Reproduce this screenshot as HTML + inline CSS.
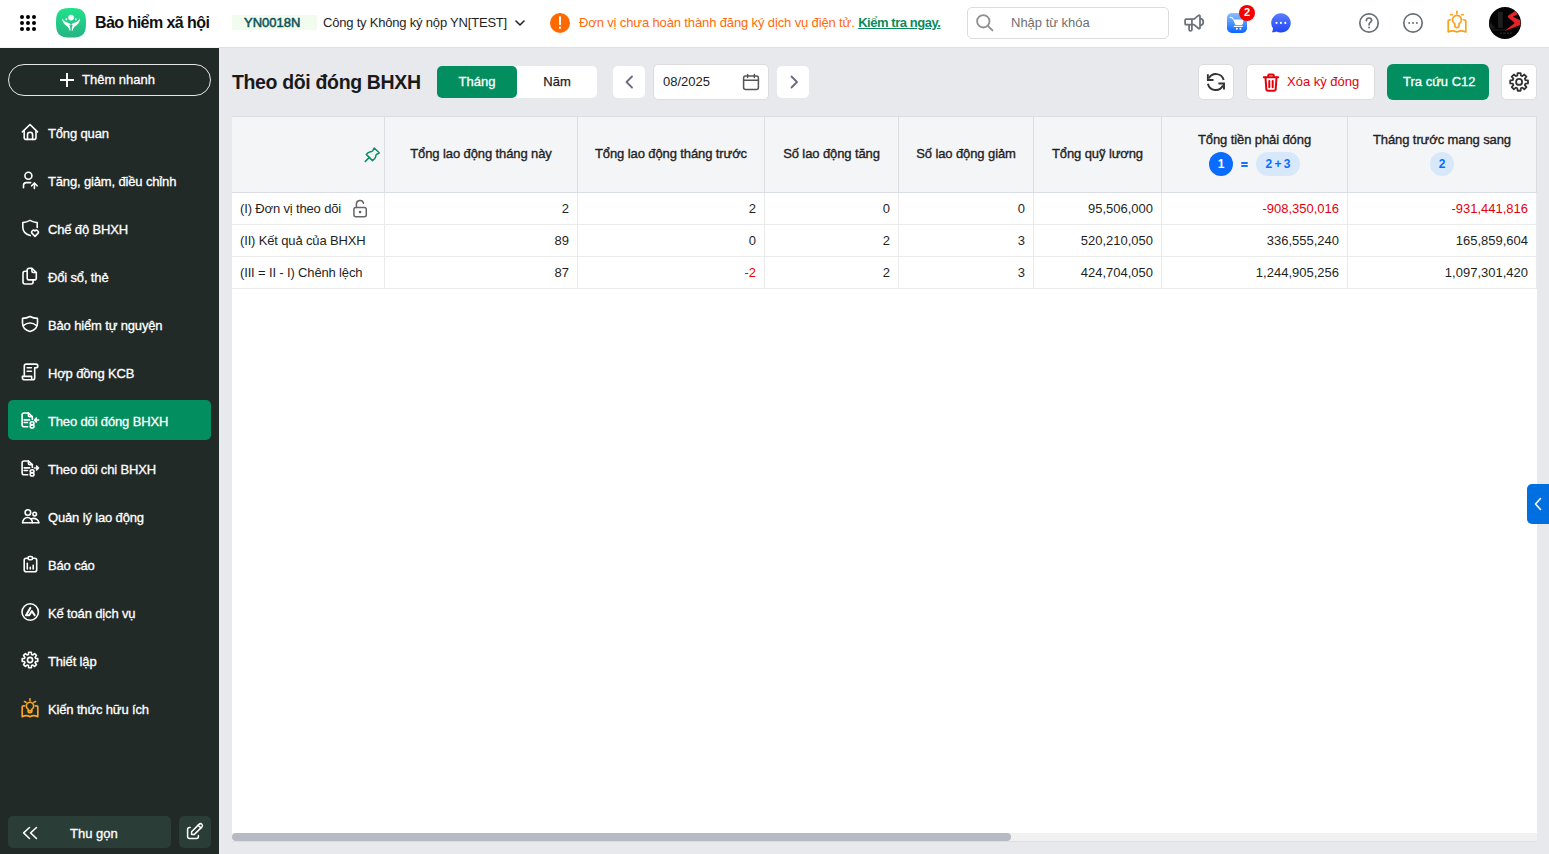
<!DOCTYPE html>
<html><head><meta charset="utf-8">
<style>
*{box-sizing:border-box;margin:0;padding:0}
html,body{width:1549px;height:854px;overflow:hidden;background:#e8e9ed;font-family:"Liberation Sans",sans-serif;color:#1f1f1f}
.abs{position:absolute}
svg{display:block}
/* header */
#hdr{position:absolute;left:0;top:0;width:1549px;height:47px;background:#fff}
.htxt{position:absolute;white-space:nowrap;line-height:16px}
/* sidebar */
#side{position:absolute;left:0;top:48px;width:219px;height:806px;background:#222a28}
.mi{position:absolute;left:8px;width:203px;height:40px;border-radius:5px}
.mi .ic{position:absolute;left:6px;top:6px}
.mi .t{position:absolute;left:40px;top:2px;line-height:40px;font-size:13px;color:#fff;white-space:nowrap;letter-spacing:-.15px;-webkit-text-stroke:.3px #fff}
.mi.act{background:#028e5e}
/* main */
.btnw{position:absolute;background:#fff;border-radius:5px}
#tbl{position:absolute;left:232px;top:116px;width:1305px;height:726px;background:#fff}
.th{position:absolute;top:0;height:77px;background:#f4f5f7;border-top:1px solid #dcdee8;border-bottom:1px solid #dcdee8;border-right:1px solid #dedfe3}
.thl{position:absolute;width:100%;text-align:center;font-size:13px;font-weight:700;letter-spacing:-.5px;color:#1f1f1f;white-space:nowrap}
.row{position:absolute;left:0;width:1305px;height:32px;border-bottom:1px solid #ebebeb}
.cell{position:absolute;top:0;height:31px;line-height:31px;font-size:13px;color:#1f1f1f;border-right:1px solid #ebebeb;text-align:right;padding-right:8px;white-space:nowrap}
.hd{font-size:13px;font-weight:400;-webkit-text-stroke:.35px #1f1f1f;letter-spacing:-.1px;line-height:16px;text-align:center;white-space:nowrap;color:#1f1f1f}
.bt{font-size:13px;line-height:16px;white-space:nowrap;color:#1f1f1f}
.bdg{height:24px;border-radius:12px;text-align:center;line-height:24px;font-size:12px;font-weight:700}
.bt.neg{color:#e4000f}
.tb{top:74px;font-size:13px;line-height:16px;white-space:nowrap}
</style></head>
<body>
<div id="hdr">
  <!-- apps grid -->
  <svg class="abs" style="left:18px;top:13px" width="20" height="20" viewBox="0 0 20 20" fill="#000">
    <circle cx="4" cy="4" r="2"/><circle cx="10" cy="4" r="2"/><circle cx="16" cy="4" r="2"/>
    <circle cx="4" cy="10" r="2"/><circle cx="10" cy="10" r="2"/><circle cx="16" cy="10" r="2"/>
    <circle cx="4" cy="16" r="2"/><circle cx="10" cy="16" r="2"/><circle cx="16" cy="16" r="2"/>
  </svg>
  <!-- logo -->
  <svg class="abs" style="left:56px;top:8px" width="30" height="30" viewBox="0 0 30 30">
    <defs><linearGradient id="lg" x1="0" y1="0" x2="0" y2="1"><stop offset="0" stop-color="#20e28b"/><stop offset="1" stop-color="#26b384"/></linearGradient></defs>
    <path d="M15 0C26.6 0 30 3 30 14.8S26.6 29.6 15 29.6 0 26.6 0 14.8 3.4 0 15 0Z" fill="url(#lg)"/>
    <circle cx="15.1" cy="9.6" r="2.8" fill="#fff"/>
    <path d="M10.35 10.1l1.2 1.25-1.2 1.25-1.2-1.25z M19.85 10.1l1.2 1.25-1.2 1.25-1.2-1.25z" fill="#fff"/>
    <path id="hl" d="M6.2 10C6.3 13.5 7.5 15.8 10 17.5 12 18.9 13.2 20.5 13.6 22.8L14.4 22.8C14.5 20.5 14.3 18.6 13.5 17.2 14 16.8 14.8 16.5 15.1 16.6 14 15.6 12.5 15 11.2 14.6 9.5 14 7.2 12.6 6.2 10Z" fill="#fff"/>
    <use href="#hl" transform="translate(30.2 0) scale(-1 1)"/>
  </svg>
  <div class="htxt" style="left:95px;top:14px;font-size:16px;font-weight:700;letter-spacing:-.55px;color:#111;line-height:18px">Bảo hiểm xã hội</div>
  <!-- code badge -->
  <div class="abs" style="left:232px;top:15px;width:85px;height:15px;background:#f1fbee"></div>
  <div class="htxt" style="left:244px;top:15px;font-size:13px;font-weight:400;-webkit-text-stroke:.5px #0a5258;color:#0a5258">YN0018N</div>
  <div class="htxt" style="left:323px;top:15px;font-size:13px;color:#1f1f1f;letter-spacing:-.2px">Công ty Không ký nộp YN[TEST]</div>
  <svg class="abs" style="left:513px;top:16px" width="14" height="14" viewBox="0 0 14 14"><path d="M3 5l4 4 4-4" fill="none" stroke="#222" stroke-width="1.6" stroke-linecap="round" stroke-linejoin="round"/></svg>
  <!-- alert -->
  <svg class="abs" style="left:550px;top:13px" width="20" height="20" viewBox="0 0 20 20"><circle cx="10" cy="10" r="10" fill="#ff6a00"/><rect x="9" y="3.2" width="2" height="8.8" rx=".5" fill="#fff"/><rect x="9" y="13.7" width="2" height="2" fill="#fff"/></svg>
  <div class="htxt" style="left:579px;top:15px;font-size:13px;color:#ff6a0a;letter-spacing:-.13px">Đơn vị chưa hoàn thành đăng ký dịch vụ điện tử. <span style="color:#0a8a5c;font-weight:700;text-decoration:underline;letter-spacing:-.45px">Kiểm tra ngay.</span></div>
  <!-- search -->
  <div class="abs" style="left:967px;top:7px;width:202px;height:32px;border:1px solid #dcdcdc;border-radius:5px;background:#fff"></div>
  <svg class="abs" style="left:975px;top:13px" width="20" height="20" viewBox="0 0 20 20"><circle cx="8.3" cy="8.3" r="6.2" fill="none" stroke="#909090" stroke-width="1.8"/><path d="M12.8 12.8l4.6 4.6" stroke="#909090" stroke-width="1.9" stroke-linecap="round"/></svg>
  <div class="htxt" style="left:1011px;top:15px;font-size:13px;color:#6f6f6f">Nhập từ khóa</div>
  <!-- megaphone -->
  <svg class="abs" style="left:1180px;top:8px" width="30" height="30" viewBox="0 0 30 30" fill="none" stroke="#6b7079" stroke-width="1.75" stroke-linejoin="round" stroke-linecap="round">
    <path d="M6.1 11.1H14l4.6-3.7c.6-.5 1.4-.1 1.4.7v11.7c0 .8-.8 1.2-1.4.7L14 16.7H6.1q-1 0-1-1v-3.6q0-1 1-1z"/><path d="M11.9 11.3v5.2"/><path d="M9.1 16.9v4.5a1.4 1.4 0 0 0 2.8 0v-4.5"/><path d="M20.9 10.6a3.6 3.6 0 0 1 0 6.8"/>
  </svg>
  <!-- cart -->
  <svg class="abs" style="left:1227px;top:13px" width="20" height="20" viewBox="0 0 20 20">
    <defs><linearGradient id="cg" x1="0" y1="0" x2="0" y2="1"><stop offset="0" stop-color="#8cc0ff"/><stop offset="1" stop-color="#0a66ff"/></linearGradient></defs>
    <rect width="20" height="20" rx="4.8" fill="url(#cg)"/>
    <path d="M3.2 4.4c1.6 0 2.4.4 2.9 1.6" fill="none" stroke="#fff" stroke-width="1.2" stroke-linecap="round"/>
    <path d="M6.1 6.6h10.4l-.5 3.8-1.1 1.7H8.4z" fill="#fff"/>
    <path d="M7.3 13.4h8" stroke="#fff" stroke-width="1.1" stroke-linecap="round"/>
    <circle cx="9.8" cy="15.8" r="1" fill="#fff"/><circle cx="13.4" cy="15.8" r="1" fill="#fff"/>
  </svg>
  <svg class="abs" style="left:1239px;top:5px" width="16" height="16" viewBox="0 0 16 16"><circle cx="8" cy="8" r="8" fill="#f50000"/></svg>
  <div class="htxt" style="left:1239px;top:4px;width:16px;text-align:center;font-size:11px;font-weight:700;color:#fff;line-height:16px">2</div>
  <!-- messenger -->
  <svg class="abs" style="left:1266px;top:8px" width="30" height="30" viewBox="0 0 30 30">
    <defs><linearGradient id="mg" x1="0" y1="0" x2="0" y2="1"><stop offset="0" stop-color="#5d7dff"/><stop offset="1" stop-color="#1f46f4"/></linearGradient></defs>
    <path d="M14.95 5.2a9.7 9.7 0 1 1-4.6 18.2c-1.4.5-3 .9-4.6.9.9-1 1.2-2.5 1.2-4A9.7 9.7 0 0 1 14.95 5.2z" fill="url(#mg)"/>
    <circle cx="10.5" cy="14.9" r="1.05" fill="#fff"/><circle cx="14.9" cy="14.9" r="1.05" fill="#fff"/><circle cx="19.3" cy="14.9" r="1.05" fill="#fff"/>
  </svg>
  <!-- help -->
  <svg class="abs" style="left:1358px;top:12px" width="22" height="22" viewBox="0 0 22 22" fill="none" stroke="#6b7079" stroke-width="1.7">
    <circle cx="11" cy="11" r="9.2"/><path d="M8.4 8.6c0-1.6 1.2-2.6 2.6-2.6s2.6 1 2.6 2.4c0 1.8-2.5 2-2.5 3.8v.6" stroke-linecap="round"/><circle cx="11.1" cy="15.6" r=".4" fill="#6b7079" stroke-width="1.2"/>
  </svg>
  <!-- more -->
  <svg class="abs" style="left:1402px;top:12px" width="22" height="22" viewBox="0 0 22 22">
    <circle cx="11" cy="11" r="9.2" fill="none" stroke="#6b7079" stroke-width="1.7"/><circle cx="7.2" cy="11" r="1" fill="#6b7079"/><circle cx="11" cy="11" r="1" fill="#6b7079"/><circle cx="14.8" cy="11" r="1" fill="#6b7079"/>
  </svg>
  <!-- bulb -->
  <svg class="abs" style="left:1442px;top:8px" width="30" height="30" viewBox="0 0 30 30" fill="none" stroke="#f9a11b" stroke-width="1.65" stroke-linecap="round" stroke-linejoin="round">
    <path id="bulbp" d="M14.9 3.4v2.2M8.5 6.7h1.9M19.4 6.7h2M12.8 15.6a4.4 4.4 0 1 1 4.3 0V18q0 1.6-1.6 1.6h-1.1q-1.6 0-1.6-1.6zM8.4 11.7q-2.2 0-2.2 1.3V24c3-1.6 5.8-1.6 8.7 0 2.9-1.6 5.8-1.6 8.9 0V13q0-1.3-2.4-1.3"/>
  </svg>
  <!-- avatar -->
  <svg class="abs" style="left:1489px;top:7px" width="32" height="32" viewBox="0 0 32 32">
    <defs><clipPath id="ac"><circle cx="16" cy="16" r="16"/></clipPath></defs>
    <g clip-path="url(#ac)"><rect width="32" height="32" fill="#030303"/>
    <path d="M0 13.8L6.6 21.5H0z" fill="#1c1c1c"/><rect x="8.9" y="4.7" width="4.9" height="16.1" fill="#1e1e1e"/>
    <path d="M26.2 4L28.8 7.2 23.9 9.8 31.4 13.3V18L15.5 24.1 25.8 16.1 19.2 10.5 18.7 9.1z" fill="#e5222a"/>
    <rect x="2.8" y="22.6" width="13" height=".8" fill="#2a2a2a"/>
    <path d="M11 26.2h2M14 26.2h3M18 26.2h2M21 26.2h2" stroke="#202020" stroke-width="1.6"/></g>
  </svg>
</div>

<div class="abs" style="left:0;top:47px;width:219px;height:1px;background:#f4f4f4"></div>
<div class="abs" style="left:219px;top:47px;width:1330px;height:1px;background:#e0e0e2"></div>
<div id="side">

<div class="abs" style="left:8px;top:16px;width:203px;height:32px;border:1px solid #e6e6e6;border-radius:16px"></div>
<svg class="abs" style="left:60px;top:25px" width="14" height="14" viewBox="0 0 14 14"><path d="M7 0v14M0 7h14" stroke="#fff" stroke-width="1.9"/></svg>
<div class="abs" style="left:82px;top:16px;line-height:32px;font-size:13px;color:#fff;white-space:nowrap;-webkit-text-stroke:.3px #fff">Thêm nhanh</div>
<div class="abs" style="left:8px;top:768px;width:163px;height:32px;background:#2a3d37;border-radius:5px"></div>
<svg class="abs" style="left:14px;top:770px" width="30" height="30" viewBox="0 0 30 30" fill="none" stroke="#fff" stroke-width="1.5" stroke-linecap="round" stroke-linejoin="round"><path d="M15.5 9.5L9.6 14.9l5.9 5.6M22.5 9.5l-5.9 5.4 5.9 5.6"/></svg>
<div class="abs" style="left:70px;top:770px;line-height:32px;font-size:13px;color:#fff;white-space:nowrap;-webkit-text-stroke:.3px #fff">Thu gọn</div>
<div class="abs" style="left:179px;top:768px;width:32px;height:32px;background:#2a3d37;border-radius:5px"></div>
<svg class="abs" style="left:180px;top:770px" width="30" height="30" viewBox="0 0 30 30" fill="none" stroke="#fff" stroke-width="1.5" stroke-linecap="round" stroke-linejoin="round"><path d="M10.2 9.5h-.6q-2 0-2 2v7q0 2 2 2h6.8q2 0 2-2v-.9"/><path d="M11.6 16.4v-2.7l7.6-7.6a2 2 0 0 1 2.8 2.8l-7.6 7.5z"/><path d="M18.1 7.2l2.7 2.7"/></svg>
<div class="mi" style="top:64px"><svg class="ic" width="30" height="30" viewBox="0 0 30 30" fill="none" stroke="#fff" stroke-width="1.6" stroke-linecap="round" stroke-linejoin="round"><path d="M8.4 13.9L16 6.5l7.5 7.4"/><path d="M10.2 12.6v6.8q0 2 2 2h7.8q2 0 2-2v-6.8"/><path d="M13.5 21.4v-4.6q0-2.5 2.55-2.5t2.55 2.5v4.6"/></svg><div class="t">Tổng quan</div></div>
<div class="mi" style="top:112px"><svg class="ic" width="30" height="30" viewBox="0 0 30 30" fill="none" stroke="#fff" stroke-width="1.6" stroke-linecap="round" stroke-linejoin="round"><circle cx="14.4" cy="9.8" r="3.5"/><path d="M9.5 21.8v-2.3q0-2.9 2.9-2.9h4.3"/><path d="M20.4 22.5v-5.4M17.7 19.8l2.7-2.8 2.7 2.8"/></svg><div class="t">Tăng, giảm, điều chỉnh</div></div>
<div class="mi" style="top:160px"><svg class="ic" width="30" height="30" viewBox="0 0 30 30" fill="none" stroke="#fff" stroke-width="1.6" stroke-linecap="round" stroke-linejoin="round"><path d="M23.2 13.4V8.6c-2.6-.2-4.9-.9-7.2-2.2-2.3 1.3-4.6 2-7.2 2.2V13c0 4.2 3 7.3 7.4 8.6"/><path d="M21 22.4l-2.9-3a1.75 1.75 0 0 1 2.9-2.4 1.75 1.75 0 0 1 2.9 2.4z"/></svg><div class="t">Chế độ BHXH</div></div>
<div class="mi" style="top:208px"><svg class="ic" width="30" height="30" viewBox="0 0 30 30" fill="none" stroke="#fff" stroke-width="1.6" stroke-linecap="round" stroke-linejoin="round"><path d="M13.1 9.3h-2.1q-2 0-2 2v8.7q0 2 2 2h6.1q2 0 2-2v-2.1"/><path d="M15.2 6.3h2.7l4.4 4.3v5.3q0 2-2 2h-5.1q-2 0-2-2v-7.6q0-2 2-2z"/><path d="M17.9 6.5v2.6q0 1.4 1.4 1.4h2.9"/></svg><div class="t">Đổi sổ, thẻ</div></div>
<div class="mi" style="top:256px"><svg class="ic" width="30" height="30" viewBox="0 0 30 30" fill="none" stroke="#fff" stroke-width="1.6" stroke-linecap="round" stroke-linejoin="round"><path d="M16 6.5c2.4 1.3 4.9 1.9 7.5 1.9V13c0 4.4-3 7.3-7.5 8.6-4.5-1.3-7.5-4.2-7.5-8.6V8.4c2.6 0 5.1-.6 7.5-1.9z"/><path d="M9.3 15.6c2-1.6 4.3-2.6 6.7-2.6s4.7 1 6.7 2.6"/></svg><div class="t">Bảo hiểm tự nguyện</div></div>
<div class="mi" style="top:304px"><svg class="ic" width="30" height="30" viewBox="0 0 30 30" fill="none" stroke="#fff" stroke-width="1.6" stroke-linecap="round" stroke-linejoin="round"><path d="M10.3 18.4V8.1q0-2 2-2h9.6q1.9 0 1.9 1.8t-1.9 1.8h-1.2v10q0 2.1-2.1 2.1h-8q-2.2 0-2.2-2v-1.4h9.2v1.6q0 1.8 1.2 1.8"/><path d="M13.2 9.7h4.2M13.2 13.2h4.2"/></svg><div class="t">Hợp đồng KCB</div></div>
<div class="mi act" style="top:352px"><svg class="ic" width="30" height="30" viewBox="0 0 30 30" fill="none" stroke="#fff" stroke-width="1.6" stroke-linecap="round" stroke-linejoin="round"><path d="M13.7 20.7h-3.6q-2 0-2-2v-9.7q0-2 2-2h4.3l3.9 3.7v2.8"/><path d="M14.4 7.1v2.3q0 1.2 1.2 1.2h2.6"/><path d="M10.2 13.9h5.4M10.2 16.5h3.3"/><ellipse cx="18.1" cy="17.2" rx="1.9" ry="1.5"/><ellipse cx="18.1" cy="20.4" rx="1.9" ry="1.6"/><path d="M24.6 14h-3.8M22.4 12.1l-1.9 1.9 1.9 1.9"/></svg><div class="t">Theo dõi đóng BHXH</div></div>
<div class="mi" style="top:400px"><svg class="ic" width="30" height="30" viewBox="0 0 30 30" fill="none" stroke="#fff" stroke-width="1.6" stroke-linecap="round" stroke-linejoin="round"><path d="M13.7 20.7h-3.6q-2 0-2-2v-9.7q0-2 2-2h4.3l3.9 3.7v2.8"/><path d="M14.4 7.1v2.3q0 1.2 1.2 1.2h2.6"/><path d="M10.2 13.9h5.4M10.2 16.5h3.3"/><ellipse cx="18.1" cy="17.2" rx="1.9" ry="1.5"/><ellipse cx="18.1" cy="20.4" rx="1.9" ry="1.6"/><path d="M20.4 14h3.8M22.6 12.1l1.9 1.9-1.9 1.9"/></svg><div class="t">Theo dõi chi BHXH</div></div>
<div class="mi" style="top:448px"><svg class="ic" width="30" height="30" viewBox="0 0 30 30" fill="none" stroke="#fff" stroke-width="1.6" stroke-linecap="round" stroke-linejoin="round"><circle cx="13.9" cy="10.5" r="2.8"/><circle cx="20.7" cy="12.1" r="1.8"/><path d="M8.6 20.7h16.2"/><path d="M8.6 20.7c0-3 2.3-5.2 4.9-5.2s4.9 2.2 4.9 5.2"/><path d="M17.4 16.9c.7-.4 1.3-.5 1.9-.5 2.9 0 5.5 2 5.5 4.3"/></svg><div class="t">Quản lý lao động</div></div>
<div class="mi" style="top:496px"><svg class="ic" width="30" height="30" viewBox="0 0 30 30" fill="none" stroke="#fff" stroke-width="1.6" stroke-linecap="round" stroke-linejoin="round"><path d="M14 8.3h-1.8q-2 0-2 2v9.5q0 2 2 2h8.5q2 0 2-2v-9.5q0-2-2-2h-1.8"/><rect x="14" y="6.5" width="4.6" height="3.3" rx="1.6"/><path d="M13.3 13.2v5.8M16.3 17.4v1.6M19.2 15.2v3.8"/></svg><div class="t">Báo cáo</div></div>
<div class="mi" style="top:544px"><svg class="ic" width="30" height="30" viewBox="0 0 30 30" fill="none" stroke="#fff" stroke-width="1.6" stroke-linecap="round" stroke-linejoin="round"><circle cx="16.2" cy="14" r="8.2"/><path d="M12 17.2l4.3-7.3M12 17.2h3.2l2.7-4.1 2.8 4.2" stroke-width="2"/></svg><div class="t">Kế toán dịch vụ</div></div>
<div class="mi" style="top:592px"><svg class="ic" width="30" height="30" viewBox="0 0 30 30" fill="none" stroke="#fff" stroke-width="1.6" stroke-linecap="round" stroke-linejoin="round"><circle cx="16" cy="14" r="2.6"/><path d="M14.45 8.41 L14.66 6.21 L17.34 6.21 L17.55 8.41 L18.86 8.95 L20.56 7.55 L22.45 9.44 L21.05 11.14 L21.59 12.45 L23.79 12.66 L23.79 15.34 L21.59 15.55 L21.05 16.86 L22.45 18.56 L20.56 20.45 L18.86 19.05 L17.55 19.59 L17.34 21.79 L14.66 21.79 L14.45 19.59 L13.14 19.05 L11.44 20.45 L9.55 18.56 L10.95 16.86 L10.41 15.55 L8.21 15.34 L8.21 12.66 L10.41 12.45 L10.95 11.14 L9.55 9.44 L11.44 7.55 L13.14 8.95Z"/></svg><div class="t">Thiết lập</div></div>
<div class="mi" style="top:640px"><svg class="ic" width="30" height="30" viewBox="0 0 30 30" fill="none" stroke="#f9a825" stroke-width="1.65" stroke-linecap="round" stroke-linejoin="round"><path d="M16 4.9v1.7M10.5 7.6l1.5.6M21.5 7.6l-1.5.6M14.1 15.1a3.7 3.7 0 1 1 3.8 0v2.1q0 1.4-1.4 1.4h-1q-1.4 0-1.4-1.4zM14.3 16.6h3.4M10.4 11.9h-1.1q-1.1 0-1.1 1.1v9.7c2.8-1.5 5.2-1.5 7.8 0 2.6-1.5 5-1.5 7.8 0V13q0-1.1-1.1-1.1h-1.1"/></svg><div class="t">Kiến thức hữu ích</div></div>
</div>


<!-- toolbar -->
<div class="abs" style="left:232px;top:70px;font-size:19.5px;font-weight:700;letter-spacing:-.35px;color:#1a1a1a;line-height:24px;white-space:nowrap">Theo dõi đóng BHXH</div>
<div class="btnw" style="left:437px;top:66px;width:160px;height:32px"></div>
<div class="abs" style="left:437px;top:66px;width:80px;height:32px;background:#028e5e;border-radius:5px"></div>
<div class="abs tb" style="left:437px;width:80px;text-align:center;color:#fff;-webkit-text-stroke:.3px #fff">Tháng</div>
<div class="abs tb" style="left:517px;width:80px;text-align:center;color:#222;-webkit-text-stroke:.25px #222">Năm</div>
<div class="btnw" style="left:613px;top:66px;width:32px;height:32px"></div>
<svg class="abs" style="left:613px;top:66px" width="32" height="32" viewBox="0 0 32 32"><path d="M19 10.5l-5.5 5.5 5.5 5.5" fill="none" stroke="#6b6a80" stroke-width="1.8" stroke-linecap="round" stroke-linejoin="round"/></svg>
<div class="btnw" style="left:653px;top:64px;width:116px;height:36px;border:1px solid #dcdcdc"></div>
<div class="abs tb" style="left:663px;color:#222">08/2025</div>
<svg class="abs" style="left:741px;top:72px" width="20" height="20" viewBox="0 0 20 20" fill="none" stroke="#555" stroke-width="1.5" stroke-linecap="round"><rect x="2.6" y="4" width="14.8" height="13.6" rx="2"/><path d="M2.6 8.3h14.8M6.6 2.4v3M13.4 2.4v3"/></svg>
<div class="btnw" style="left:777px;top:66px;width:32px;height:32px"></div>
<svg class="abs" style="left:778px;top:66px" width="32" height="32" viewBox="0 0 32 32"><path d="M13.5 10.5l5.5 5.5-5.5 5.5" fill="none" stroke="#6b6a80" stroke-width="1.8" stroke-linecap="round" stroke-linejoin="round"/></svg>

<div class="btnw" style="left:1198px;top:64px;width:36px;height:36px;border:1px solid #dcdcdc"></div>
<svg class="abs" style="left:1201px;top:67px" width="30" height="30" viewBox="0 0 30 30" fill="none" stroke="#333" stroke-width="1.9" stroke-linecap="butt" stroke-linejoin="miter"><path d="M22.7 13A8 8 0 0 0 7.9 11.3"/><path d="M6.85 7.2V13H12.5"/><path d="M6.9 16.8A8 8 0 0 0 21.9 18.5"/><path d="M17.4 16.5H23V22.5"/></svg>
<div class="btnw" style="left:1246px;top:64px;width:129px;height:36px;border:1px solid #dcdcdc"></div>
<svg class="abs" style="left:1262px;top:73px" width="18" height="19" viewBox="0 0 18 19" fill="none" stroke="#e5000c" stroke-width="2" stroke-linecap="round" stroke-linejoin="round"><path d="M1.8 4.3h14.4"/><path d="M6.2 4.1V2.6q0-1.2 1.2-1.2h3.2q1.2 0 1.2 1.2v1.5"/><path d="M3.5 4.6l.8 11.4q.1 1.7 1.8 1.7h5.8q1.7 0 1.8-1.7l.8-11.4"/><path d="M7.3 8v6.2M10.7 8v6.2"/></svg>
<div class="abs tb" style="left:1287px;color:#e5000c">Xóa kỳ đóng</div>
<div class="abs" style="left:1387px;top:64px;width:102px;height:36px;background:#028e5e;border-radius:6px"></div>
<div class="abs tb" style="left:1403px;color:#fff;-webkit-text-stroke:.3px #fff">Tra cứu C12</div>
<div class="btnw" style="left:1501px;top:64px;width:36px;height:36px;border:1px solid #dcdcdc"></div>
<svg class="abs" style="left:1504px;top:67px" width="30" height="30" viewBox="0 0 30 30" fill="none" stroke="#333" stroke-width="1.8" stroke-linejoin="round"><circle cx="15.1" cy="14.9" r="3"/><path d="M13.34 8.54 L13.58 6.03 L16.62 6.03 L16.86 8.54 L18.35 9.16 L20.30 7.55 L22.45 9.70 L20.84 11.65 L21.46 13.14 L23.97 13.38 L23.97 16.42 L21.46 16.66 L20.84 18.15 L22.45 20.10 L20.30 22.25 L18.35 20.64 L16.86 21.26 L16.62 23.77 L13.58 23.77 L13.34 21.26 L11.85 20.64 L9.90 22.25 L7.75 20.10 L9.36 18.15 L8.74 16.66 L6.23 16.42 L6.23 13.38 L8.74 13.14 L9.36 11.65 L7.75 9.70 L9.90 7.55 L11.85 9.16Z"/></svg>
<div id="tbl"></div>
<div class="abs" style="left:232px;top:116px;width:1305px;height:77px;background:#f4f5f7;border-top:1px solid #dadce6;border-bottom:1px solid #dadce6"></div>
<div class="abs" style="left:384px;top:117px;width:1px;height:75px;background:#dcdde2"></div>
<div class="abs" style="left:384px;top:193px;width:1px;height:96px;background:#ebebeb"></div>
<div class="abs" style="left:577px;top:117px;width:1px;height:75px;background:#dcdde2"></div>
<div class="abs" style="left:577px;top:193px;width:1px;height:96px;background:#ebebeb"></div>
<div class="abs" style="left:764px;top:117px;width:1px;height:75px;background:#dcdde2"></div>
<div class="abs" style="left:764px;top:193px;width:1px;height:96px;background:#ebebeb"></div>
<div class="abs" style="left:898px;top:117px;width:1px;height:75px;background:#dcdde2"></div>
<div class="abs" style="left:898px;top:193px;width:1px;height:96px;background:#ebebeb"></div>
<div class="abs" style="left:1033px;top:117px;width:1px;height:75px;background:#dcdde2"></div>
<div class="abs" style="left:1033px;top:193px;width:1px;height:96px;background:#ebebeb"></div>
<div class="abs" style="left:1161px;top:117px;width:1px;height:75px;background:#dcdde2"></div>
<div class="abs" style="left:1161px;top:193px;width:1px;height:96px;background:#ebebeb"></div>
<div class="abs" style="left:1347px;top:117px;width:1px;height:75px;background:#dcdde2"></div>
<div class="abs" style="left:1347px;top:193px;width:1px;height:96px;background:#ebebeb"></div>
<div class="abs" style="left:1536px;top:117px;width:1px;height:75px;background:#dcdde2"></div>
<div class="abs" style="left:1536px;top:193px;width:1px;height:96px;background:#ebebeb"></div>
<div class="abs" style="left:232px;top:224px;width:1305px;height:1px;background:#ebebeb"></div>
<div class="abs" style="left:232px;top:256px;width:1305px;height:1px;background:#ebebeb"></div>
<div class="abs" style="left:232px;top:288px;width:1305px;height:1px;background:#ebebeb"></div>
<div class="abs hd" style="left:385px;width:192px;top:146px">Tổng lao động tháng này</div>
<div class="abs hd" style="left:578px;width:186px;top:146px">Tổng lao động tháng trước</div>
<div class="abs hd" style="left:765px;width:133px;top:146px">Số lao động tăng</div>
<div class="abs hd" style="left:899px;width:134px;top:146px">Số lao động giảm</div>
<div class="abs hd" style="left:1034px;width:127px;top:146px">Tổng quỹ lương</div>
<div class="abs hd" style="left:1162px;width:185px;top:132px">Tổng tiền phải đóng</div>
<div class="abs hd" style="left:1348px;width:188px;top:132px">Tháng trước mang sang</div>
<div class="abs bdg" style="left:1209px;top:152px;width:24px;background:#0a6cff;color:#fff">1</div>
<div class="abs" style="left:1241px;top:162px;width:7px;height:2px;background:#1a73ff;border-radius:1px"></div>
<div class="abs" style="left:1241px;top:165px;width:7px;height:2px;background:#1a73ff;border-radius:1px"></div>
<div class="abs bdg" style="left:1256px;top:152px;width:44px;background:#d6e8fa;color:#0a6cff;word-spacing:-1px">2 + 3</div>
<div class="abs bdg" style="left:1430px;top:152px;width:24px;background:#d6e8fa;color:#0a6cff">2</div>
<svg class="abs" style="left:362px;top:145px" width="20" height="20" viewBox="0 0 20 20" fill="none" stroke="#0a8f5e" stroke-width="1.5" stroke-linecap="round" stroke-linejoin="round"><path d="M12.2 3l5 4.8c-.2.4-1.6 1.1-2.6 1.4-.5.2-.8 1.3-1 2.6-.2 1.4-2.2 3.1-3.1 3.8L4.3 9.4c.6-.9 2.4-2.3 3.5-2.5 1.3-.2 2.6-.5 2.9-1 .4-.9 1.1-2.6 1.5-2.9z"/><path d="M7.1 12.6l-3.8 3.8"/></svg>
<div class="abs bt" style="left:240px;top:201px;letter-spacing:-.15px">(I) Đơn vị theo dõi</div>
<div class="abs bt" style="left:369px;width:200px;text-align:right;top:201px">2</div>
<div class="abs bt" style="left:556px;width:200px;text-align:right;top:201px">2</div>
<div class="abs bt" style="left:690px;width:200px;text-align:right;top:201px">0</div>
<div class="abs bt" style="left:825px;width:200px;text-align:right;top:201px">0</div>
<div class="abs bt" style="left:953px;width:200px;text-align:right;top:201px">95,506,000</div>
<div class="abs bt neg" style="left:1139px;width:200px;text-align:right;top:201px">-908,350,016</div>
<div class="abs bt neg" style="left:1328px;width:200px;text-align:right;top:201px">-931,441,816</div>
<div class="abs bt" style="left:240px;top:233px;letter-spacing:-.15px">(II) Kết quả của BHXH</div>
<div class="abs bt" style="left:369px;width:200px;text-align:right;top:233px">89</div>
<div class="abs bt" style="left:556px;width:200px;text-align:right;top:233px">0</div>
<div class="abs bt" style="left:690px;width:200px;text-align:right;top:233px">2</div>
<div class="abs bt" style="left:825px;width:200px;text-align:right;top:233px">3</div>
<div class="abs bt" style="left:953px;width:200px;text-align:right;top:233px">520,210,050</div>
<div class="abs bt" style="left:1139px;width:200px;text-align:right;top:233px">336,555,240</div>
<div class="abs bt" style="left:1328px;width:200px;text-align:right;top:233px">165,859,604</div>
<div class="abs bt" style="left:240px;top:265px;letter-spacing:-.15px">(III = II - I) Chênh lệch</div>
<div class="abs bt" style="left:369px;width:200px;text-align:right;top:265px">87</div>
<div class="abs bt neg" style="left:556px;width:200px;text-align:right;top:265px">-2</div>
<div class="abs bt" style="left:690px;width:200px;text-align:right;top:265px">2</div>
<div class="abs bt" style="left:825px;width:200px;text-align:right;top:265px">3</div>
<div class="abs bt" style="left:953px;width:200px;text-align:right;top:265px">424,704,050</div>
<div class="abs bt" style="left:1139px;width:200px;text-align:right;top:265px">1,244,905,256</div>
<div class="abs bt" style="left:1328px;width:200px;text-align:right;top:265px">1,097,301,420</div>
<svg class="abs" style="left:350px;top:198px" width="20" height="20" viewBox="0 0 20 20" fill="none" stroke="#666" stroke-width="1.5" stroke-linecap="round"><rect x="3.9" y="9.6" width="12.4" height="9.1" rx="2"/><path d="M6.4 9.4V6.1a3.6 3.6 0 0 1 7.1-.9"/><circle cx="10.1" cy="14.1" r=".6" fill="#666"/></svg>
<div class="abs" style="left:232px;top:833px;width:1305px;height:9px;background:#f1f1f1;border-bottom:1px solid #dedede"></div>
<div class="abs" style="left:232px;top:833px;width:779px;height:8px;background:#b6bac3;border-radius:4px"></div>
<!-- right side tab -->
<div class="abs" style="left:1527px;top:484px;width:22px;height:40px;background:#0070e0;border-radius:5px 0 0 5px"></div>
<svg class="abs" style="left:1527px;top:484px" width="22" height="40" viewBox="0 0 22 40"><path d="M13.5 14.5L8.5 20l5 5.5" fill="none" stroke="#fff" stroke-width="1.6" stroke-linecap="round" stroke-linejoin="round"/></svg>

</body></html>
